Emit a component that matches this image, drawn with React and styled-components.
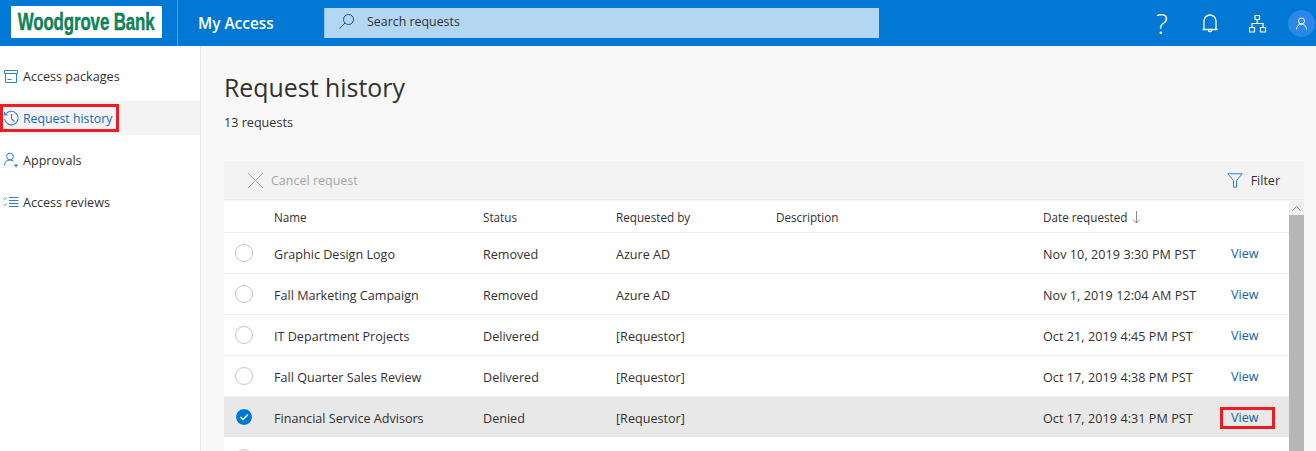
import React from 'react';
import styled, { createGlobalStyle } from 'styled-components';

const Global = createGlobalStyle`
  html, body { margin: 0; padding: 0; height: 451px; overflow: hidden; background: #fff; }
  body { font-family: "Open Sans", "Noto Sans", sans-serif; color: #323130; }
  * { box-sizing: border-box; }
`;

const Page = styled.div`
  width: 1316px; height: 451px; overflow: hidden; display: flex; flex-direction: column;
`;
const Header = styled.header`
  height: 46px; flex: none; background: #0078d4; display: flex; align-items: center; color: #fff;
`;
const LogoCell = styled.div`
  width: 178px; height: 46px; flex: none; padding: 6px 0 0 11px; border-right: 1px solid #4ea0e0;
`;
const LogoBox = styled.div`
  width: 151px; height: 32px; background: #fff; display: flex; align-items: center; justify-content: center; overflow: hidden;
`;
const LogoText = styled.span`
  font-family: "Liberation Sans", sans-serif; font-weight: 700; font-size: 24.5px; letter-spacing: -0.2px; color: #0c8a4c;
  -webkit-text-stroke: 0.4px #0a5f70; white-space: nowrap; flex: none; display: inline-block; transform: scaleX(0.69);
`;
const AppName = styled.div`
  width: 146px; flex: none; padding-left: 20px; font-size: 15.4px; font-weight: 600;
`;
const Search = styled.div`
  width: 555px; height: 30px; flex: none; margin-top: -1px; background: #b3d6f2; color: #323130; display: flex; align-items: center;
  padding: 0 0 2px 13px; gap: 12px; font-size: 12.4px; border-left: 1px solid #8fc0e8;
`;
const HeaderIcons = styled.div`
  margin-left: auto; display: flex; align-items: center;
`;
const HeaderIcon = styled.div`
  width: 48px; height: 46px; display: flex; align-items: center; justify-content: center;
`;
const Avatar = styled.div`
  width: 27px; height: 27px; border-radius: 50%; background: #2b88e8; display: flex; align-items: center; justify-content: center; margin: 0 1px 0 6px;
`;
const Help = styled.span`
  font-family: "Open Sans", sans-serif; font-size: 28px; font-weight: 300; line-height: 1;
`;
const Body = styled.div`
  flex: 1; display: flex; min-height: 0;
`;
const Side = styled.nav`
  width: 201px; flex: none; background: #fff; border-right: 1px solid #e8e8e8; padding-top: 13px; display: flex; flex-direction: column; gap: 8px;
`;
const NavItem = styled.div`
  height: 34px; display: flex; align-items: center; background: ${p => p.$active ? '#f3f3f3' : 'transparent'};
  color: ${p => p.$active ? '#0f6cbd' : '#323130'}; font-size: ${p => p.$active ? '12.3px' : '12.6px'}; white-space: nowrap;
`;
const NavInner = styled.div`
  display: flex; align-items: center; gap: 4px; height: 28px; padding: 0 4px 0 3px;
  ${p => p.$mark ? 'outline: 3px solid #ed1c24; outline-offset: -3px; width: 119px; gap: 3px;' : ''}
`;
const Main = styled.main`
  flex: 1; background: #f8f8f8; padding: 23px 12px 0 23px; min-width: 0;
`;
const Title = styled.h1`
  margin: 0; font-size: 24.9px; font-weight: 400; line-height: 36px; color: #323130;
`;
const Count = styled.div`
  margin-top: 8px; font-size: 12.6px; line-height: 20px;
`;
const Toolbar = styled.div`
  margin-top: 28px; height: 39px; background: #f3f3f3; display: flex; align-items: center; padding: 0 24px 0 23px; font-size: 12.5px; color: #a6a6a6;
  border-bottom: 1px solid #ebebeb;
`;
const ToolButton = styled.div`
  display: flex; align-items: center; gap: 7px;
`;
const FilterButton = styled(ToolButton)`
  margin-left: auto; color: #323130; gap: 8px;
`;
const TableWrap = styled.div`
  display: flex; margin-top: 1px; height: 250px; overflow: hidden;
`;
const Table = styled.div`
  flex: 1; min-width: 0; background: #fff;
`;
const Columns = 'grid-template-columns: 50px 209px 133px 160px 267px 188px 1fr;';
const HeadRow = styled.div`
  display: grid; ${Columns} height: 32px; padding-top: 1px; align-items: center; font-size: 11.7px; color: #323130; border-bottom: 1px solid #ececec;
`;
const Row = styled.div`
  display: grid; ${Columns} height: 41px; padding-top: 2px; align-items: center; font-size: 12.6px; color: #323130; white-space: nowrap;
  background: ${p => p.$selected ? '#e8e8e8' : '#fff'}; border-bottom: 1px solid ${p => p.$selected ? '#fff' : '#f0f0f0'};
`;
const Radio = styled.div`
  width: 18px; height: 18px; border-radius: 50%; margin: -3px 0 0 11px; border: 1px solid #c4c4c4; background: #fff;
`;
const Checked = styled.div`
  width: 18px; height: 18px; border-radius: 50%; margin: -3px 0 0 11px; background: #0078d4; border: 1px solid #fff; display: flex; align-items: center; justify-content: center;
`;
const Cell = styled.div`
  overflow: visible;
`;
const DateCell = styled(Cell)`
  letter-spacing: 0.06px;
`;
const ViewLink = styled.div`
  color: #0f639f; margin: -1px 0 0 -11px; width: 55px; height: 22px; display: flex; align-items: center; padding-left: 11px;
  ${p => p.$mark ? 'outline: 3px solid #ed1c24; outline-offset: -3px;' : ''}
`;
const Scroll = styled.div`
  width: 15px; flex: none; background: #f0f0f0; display: flex; flex-direction: column;
`;
const ScrollUp = styled.div`
  height: 14px; display: flex; align-items: center; justify-content: center; flex: none;
`;
const ScrollThumb = styled.div`
  flex: 1; background: #b6b6b6;
`;

const rows = [
  ['Graphic Design Logo', 'Removed', 'Azure AD', 'Nov 10, 2019 3:30 PM PST'],
  ['Fall Marketing Campaign', 'Removed', 'Azure AD', 'Nov 1, 2019 12:04 AM PST'],
  ['IT Department Projects', 'Delivered', '[Requestor]', 'Oct 21, 2019 4:45 PM PST'],
  ['Fall Quarter Sales Review', 'Delivered', '[Requestor]', 'Oct 17, 2019 4:38 PM PST'],
  ['Financial Service Advisors', 'Denied', '[Requestor]', 'Oct 17, 2019 4:31 PM PST', true],
  ['', '', '', ''],
];

const blue = '#2f7fd0';
const PackageIcon = () => (
  <svg width="16" height="16" viewBox="0 0 16 16" fill="none" stroke={blue} strokeWidth="1">
    <path d="M1.500 2.500h13v3h-13zM2.500 5.500v9h11v-9M4.500 11.500h4" />
  </svg>
);
const HistoryIcon = () => (
  <svg width="17" height="17" viewBox="0 0 17 17" fill="none" stroke={blue} strokeWidth="1.100">
    <path d="M2.600 4.400A6.800 6.800 0 1 1 1.600 9M1.500 2v3h3M8.500 4v5l3 2.500" />
  </svg>
);
const PersonIcon = () => (
  <svg width="16" height="16" viewBox="0 0 16 16" fill="none" stroke={blue} strokeWidth="1">
    <circle cx="7" cy="4.500" r="3.400" />
    <path d="M1.500 13.500c0-3.500 2.200-5.500 5.500-5.500 1.400 0 2.600.4 3.500 1.100M11 13.500h4M13 11.500v4" />
  </svg>
);
const ReviewIcon = () => (
  <svg width="16" height="16" viewBox="0 0 16 16" fill="none" stroke={blue} strokeWidth="1">
    <path d="M6 3.500h9.500M6 6.500h9.500M6 9.500h9.500M6 12.500h9.500M.8 4.500l1 1 2-2M.8 10.500l1 1 2-2" />
  </svg>
);
const SearchIcon = () => (
  <svg width="17" height="17" viewBox="0 0 17 17" fill="none" stroke="#1e4f7a" strokeWidth="1">
    <circle cx="10.500" cy="6.500" r="5" />
    <path d="M7 10L1.500 15.500" />
  </svg>
);
const BellIcon = () => (
  <svg width="16" height="19" viewBox="0 0 16 19" fill="none" stroke="#fff" strokeWidth="1.300">
    <path d="M.5 15.500h15M2 15.500V7a6 6 0 0 1 12 0v8.500M6.300 16.500a1.800 1.800 0 0 0 3.400 0" />
  </svg>
);
const OrgIcon = () => (
  <svg width="19" height="19" viewBox="1 0 19 19" fill="none" stroke="#fff" strokeWidth="1.200">
    <path d="M7 1.500h4.500v4H7zM1.500 13.500h5v4.500h-5zM12.500 13.500h5v4.500h-5zM9.200 5.500v4M4 13.500v-4h11v4" />
  </svg>
);
const UserIcon = () => (
  <svg width="13" height="13" viewBox="0 0 13 13" fill="none" stroke="#fff" strokeWidth="1">
    <circle cx="6.500" cy="4" r="3" />
    <path d="M1.500 12.500c0-3 2-5.500 5-5.500s5 2.500 5 5.500" />
  </svg>
);
const CloseIcon = () => (
  <svg width="17" height="17" viewBox="0 0 17 17" fill="none" stroke="#a8a8a8" strokeWidth="1">
    <path d="M1 1l15 15M16 1L1 16" />
  </svg>
);
const FilterIcon = () => (
  <svg width="16" height="15" viewBox="0 0 16 15" fill="none" stroke="#2f7fd0" strokeWidth="1">
    <path d="M.8.8h14.400L9.500 7.500v6.700h-3V7.500z" />
  </svg>
);
const DownArrow = () => (
  <svg width="9" height="13" viewBox="0 0 9 13" fill="none" stroke="#8a8a8a" strokeWidth="1" style={{ marginLeft: 5, verticalAlign: -2 }}>
    <path d="M4.500 0v12M1 8.500l3.500 3.500 3.500-3.500" />
  </svg>
);
const CheckMark = () => (
  <svg width="10" height="8" viewBox="0 0 10 8" fill="none" stroke="#fff" strokeWidth="1.400">
    <path d="M1.500 4l2.500 2.500 5-5" />
  </svg>
);
const UpChevron = () => (
  <svg width="9" height="5" viewBox="0 0 9 5" fill="none" stroke="#8f8f8f" strokeWidth="1">
    <path d="M.5 4.500l4-4 4 4" />
  </svg>
);

export default function App() {
  return (
    <Page>
      <Global />
      <Header>
        <LogoCell><LogoBox><LogoText>Woodgrove Bank</LogoText></LogoBox></LogoCell>
        <AppName>My Access</AppName>
        <Search><SearchIcon />Search requests</Search>
        <HeaderIcons>
          <HeaderIcon><Help>?</Help></HeaderIcon>
          <HeaderIcon><BellIcon /></HeaderIcon>
          <HeaderIcon><OrgIcon /></HeaderIcon>
          <Avatar><UserIcon /></Avatar>
        </HeaderIcons>
      </Header>
      <Body>
        <Side>
          <NavItem><NavInner><PackageIcon />Access packages</NavInner></NavItem>
          <NavItem $active><NavInner $mark><HistoryIcon />Request history</NavInner></NavItem>
          <NavItem><NavInner><PersonIcon />Approvals</NavInner></NavItem>
          <NavItem><NavInner><ReviewIcon />Access reviews</NavInner></NavItem>
        </Side>
        <Main>
          <Title>Request history</Title>
          <Count>13 requests</Count>
          <Toolbar>
            <ToolButton><CloseIcon />Cancel request</ToolButton>
            <FilterButton><FilterIcon />Filter</FilterButton>
          </Toolbar>
          <TableWrap>
            <Table>
              <HeadRow>
                <Cell />
                <Cell>Name</Cell>
                <Cell>Status</Cell>
                <Cell>Requested by</Cell>
                <Cell>Description</Cell>
                <Cell>Date requested<DownArrow /></Cell>
                <Cell />
              </HeadRow>
              {rows.map((r, i) => (
                <Row key={i} $selected={r[4]}>
                  <Cell>{r[4] ? <Checked><CheckMark /></Checked> : <Radio />}</Cell>
                  <Cell>{r[0]}</Cell>
                  <Cell>{r[1]}</Cell>
                  <Cell>{r[2]}</Cell>
                  <Cell />
                  <DateCell>{r[3]}</DateCell>
                  <Cell>{r[0] && <ViewLink $mark={r[4]}>View</ViewLink>}</Cell>
                </Row>
              ))}
            </Table>
            <Scroll>
              <ScrollUp><UpChevron /></ScrollUp>
              <ScrollThumb />
            </Scroll>
          </TableWrap>
        </Main>
      </Body>
    </Page>
  );
}
